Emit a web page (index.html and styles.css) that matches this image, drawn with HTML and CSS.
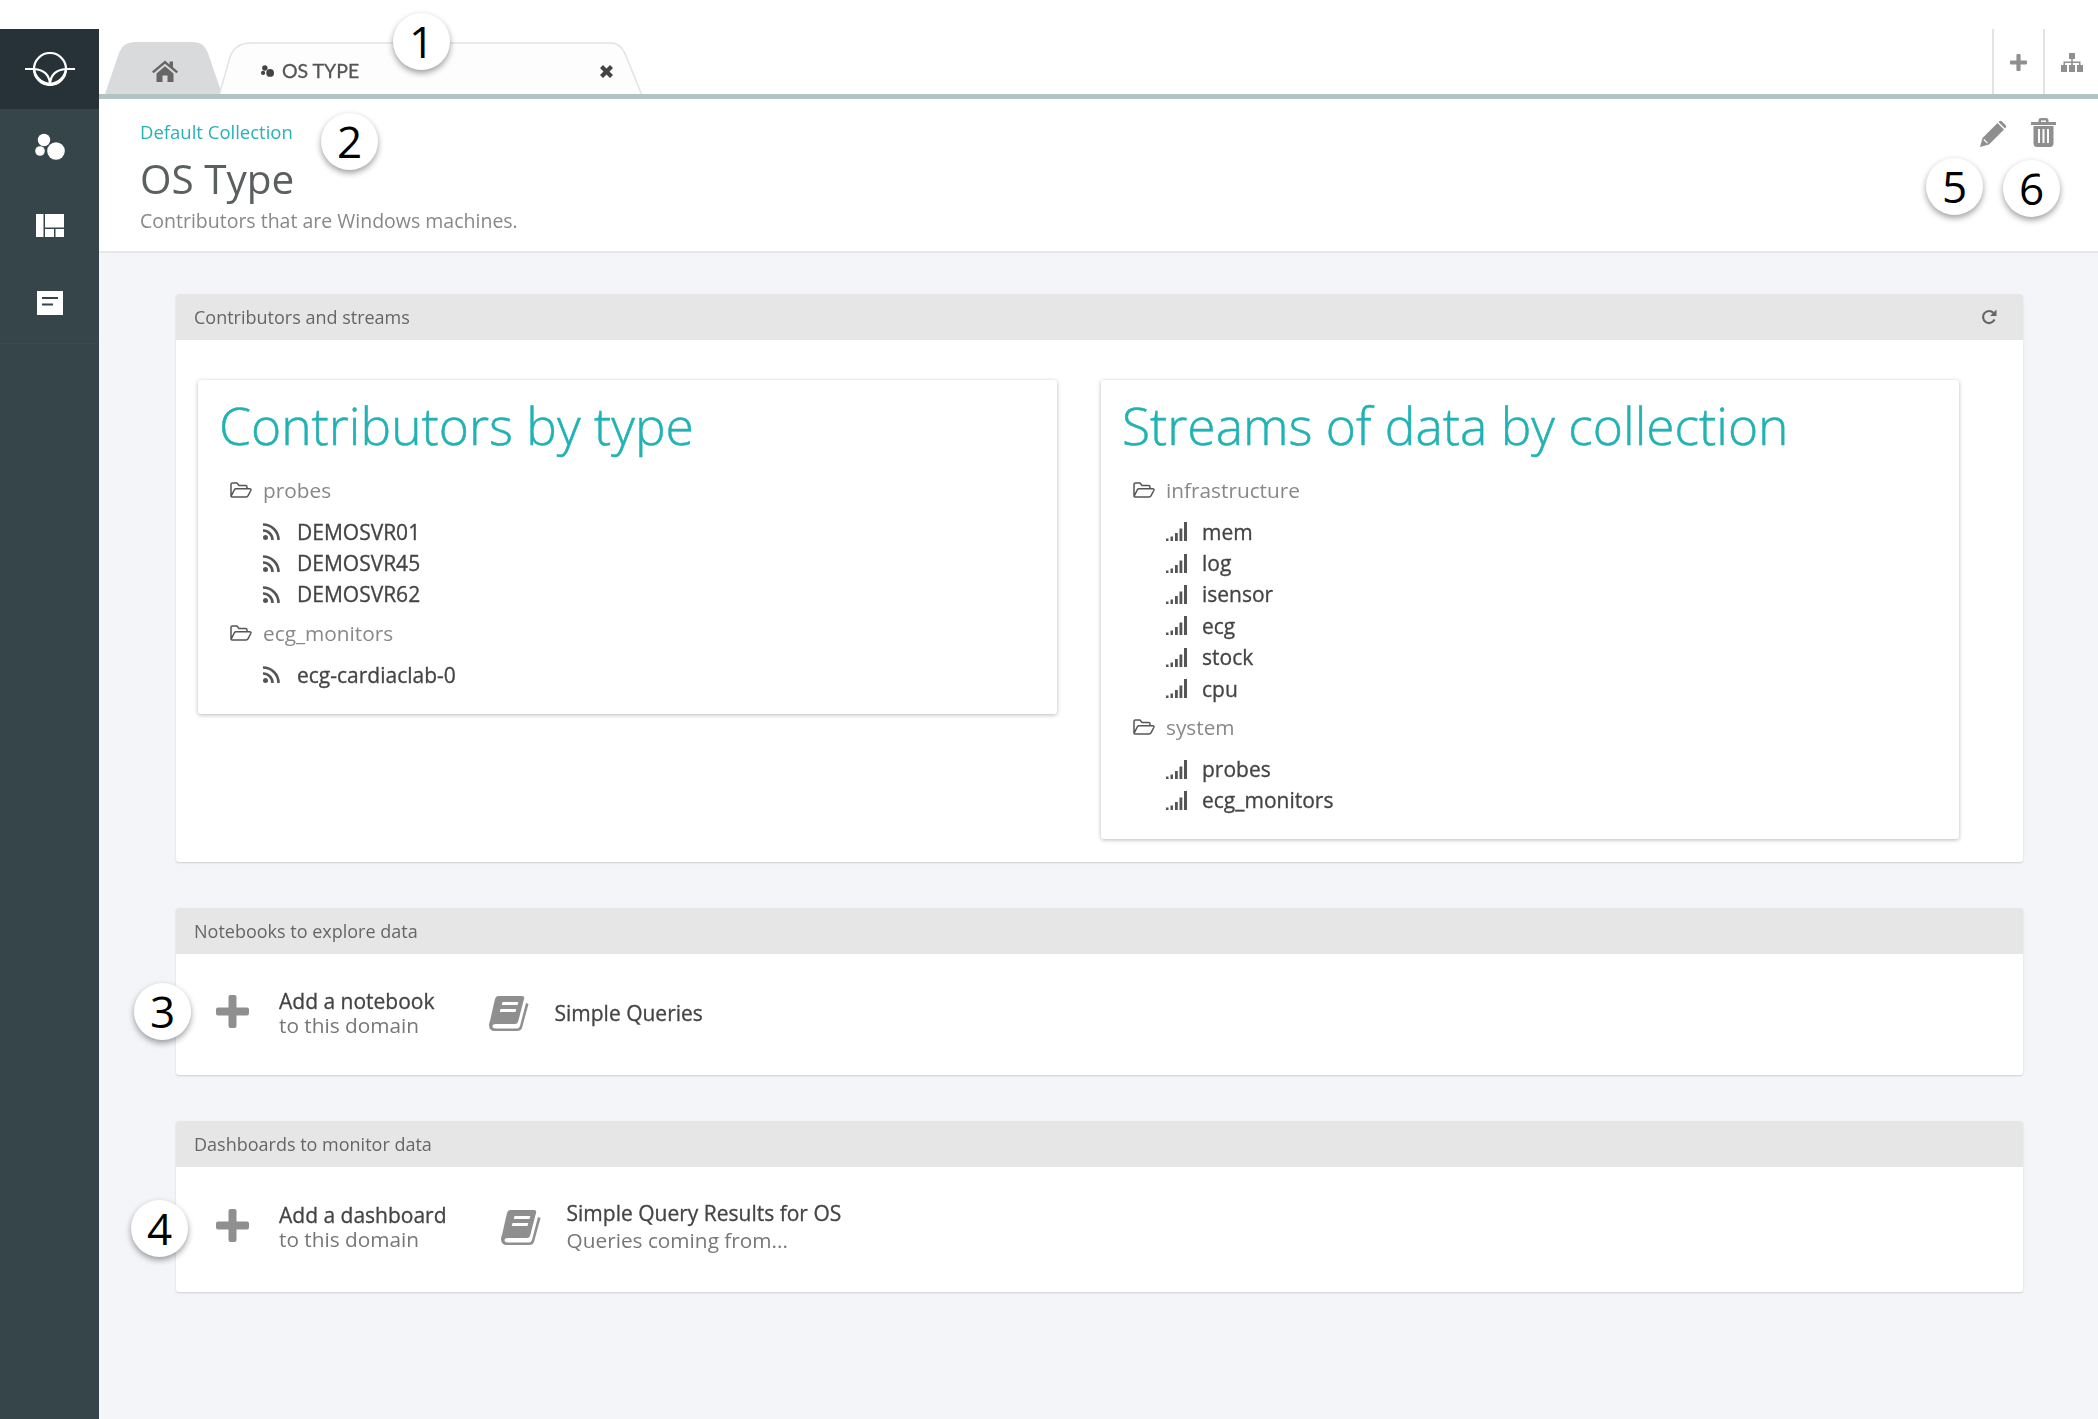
FILE: index.html
```html
<!DOCTYPE html>
<html lang="en">
<head>
<meta charset="UTF-8">
<title>OS Type</title>
<link rel="stylesheet" href="styles.css">
</head>
<body>
<svg class="defs" width="0" height="0">
  <symbol id="i-cluster" viewBox="0 0 34 34">
    <circle cx="11" cy="7" r="6.2"/><circle cx="7" cy="18" r="4.8"/><circle cx="23" cy="18" r="8.8"/>
  </symbol>
  <symbol id="i-plus" viewBox="0 0 33 33">
    <path d="M12.5 2q0-2 2-2h4q2 0 2 2v10.500h10.500q2 0 2 2v4q0 2-2 2h-10.500v10.500q0 2-2 2h-4q-2 0-2-2v-10.500h-10.500q-2 0-2-2v-4q0-2 2-2h10.500z"/>
  </symbol>
  <symbol id="i-folder" viewBox="0 0 22 16">
    <path d="M1 14V2.500Q1 1 2.500 1H7l2 2.500h6.500Q17 3.500 17 5v1.800M1 14.300L4.500 7.500Q5 6.800 6 6.800h13.500Q21.500 6.800 20.800 8.500L18 13.800Q17.500 15 16 15H2Q1 15 1 14.300z" fill="none" stroke="currentColor" stroke-width="1.500" stroke-linejoin="round"/>
  </symbol>
  <symbol id="i-rss" viewBox="0 0 18 17">
    <circle cx="2.500" cy="14.500" r="2.500" fill="currentColor"/>
    <path d="M0 7.500A9.500 9.500 0 0 1 9.500 17M0 1.500A15.500 15.500 0 0 1 15.500 17" fill="none" stroke="currentColor" stroke-width="2.600"/>
  </symbol>
  <symbol id="i-signal" viewBox="0 0 21 19">
    <path d="M0 16.500h2.500V19H0zM4.500 14.500H7V19H4.500zM9 11h2.800v8H9zM13.500 6.500h2.800V19h-2.800zM18 0h3v19h-3z" fill="currentColor"/>
  </symbol>
  <symbol id="i-book" viewBox="0 0 40 36">
    <path fill-rule="evenodd" d="M9 1H33Q36 1 35 4L29 27Q28.500 29 26 29H7Q3.500 29 3.500 31Q3.500 33.500 7 33.500H28Q30 33.500 31 31L37 8L39.500 9L33 33Q32 36 28 36H6Q0 36 0 30Q0 28 1 26L6 4Q7 1 9 1ZM13.500 7L12.800 10H28.500L29.300 7ZM11.500 14L10.800 17H26.500L27.300 14Z"/>
  </symbol>
</svg>

<div class="top-gap"></div>

<div class="app">
  <nav class="sidebar">
    <div class="logo">
      <svg width="50" height="34" viewBox="0 0 50 34" fill="none" stroke="#fff" stroke-width="2.200">
        <circle cx="25" cy="17" r="16"/>
        <path d="M0 17H10M40 17H50"/>
        <path d="M9 17Q24 18 25 32Q11 30 9 17Z"/>
        <path d="M41 17Q26 18 25 32Q39 30 41 17Z"/>
      </svg>
    </div>
    <div class="side-links">
      <a class="side-link"><svg class="side-icon" width="34" height="34"><use href="#i-cluster"/></svg></a>
      <a class="side-link">
        <svg width="28" height="23" viewBox="0 0 28 23" fill="#fff"><path d="M0 0h7.500v23H0zM9 0h19v13.500H9zM9 15h9v8H9zM19.500 15H28v8h-8.500z"/></svg>
      </a>
      <a class="side-link">
        <svg width="26" height="24" viewBox="0 0 26 24"><rect width="26" height="24" fill="#fff"/><path d="M5 6h16v2H5zM5 12.500h11v2H5z" fill="#36454a"/></svg>
      </a>
    </div>
  </nav>

  <main class="main">
    <div class="tabstrip">
      <div class="tabs">
        <div class="tab tab-home">
          <svg class="tab-shape" width="117" height="52" viewBox="0 0 117 52"><path d="M0 52L14 11Q18 0 30 0H88Q99 0 103 11L117 52Z" fill="#d9dadc"/></svg>
          <svg class="tab-icon" width="26" height="22" viewBox="0 0 26 22" fill="#666">
            <path d="M13 0.500L0 11.500l1.500 1.800L13 3.800l11.500 9.500 1.500-1.800-5-4.200V1.500h-3.500v3z"/>
            <path d="M4.500 13.500L13 6.300l8.500 7.200V22h-6v-6.500h-5V22h-6z"/>
          </svg>
        </div>
        <div class="tab tab-active">
          <svg class="tab-shape" width="423" height="52" viewBox="0 0 423 52"><path d="M0.500 52L11 15Q16 1 32 1H392Q402 1 407 14L422.500 52" fill="#fdfdfd" stroke="#e2e3e3" stroke-width="1.500"/></svg>
          <svg class="tab-dots" width="15" height="15"><use href="#i-cluster"/></svg>
          <span class="tab-label">OS TYPE</span>
          <svg class="tab-close" width="13" height="13" viewBox="0 0 13 13" fill="#444"><path d="M0 3L3 0l3.500 3.500L10 0l3 3-3.500 3.500L13 10l-3 3-3.500-3.500L3 13l-3-3 3.500-3.500z"/></svg>
        </div>
      </div>
      <div class="tools">
        <div class="tool"><svg class="tool-icon" width="17" height="17"><use href="#i-plus"/></svg></div>
        <div class="tool tool-last">
          <svg class="tool-icon" width="22" height="19" viewBox="0 0 22 19"><path d="M8 0h6v6h-2.200v2.500H19.500V12H22v7h-6v-7h2V10H11.800v2H14v7H8v-7h2.200v-2H4v2h2v7H0v-7h2.500V8.500h7.700V6H8z"/></svg>
        </div>
      </div>
    </div>

    <header class="page-head">
      <div class="head-text">
        <a class="crumb">Default Collection</a>
        <h1 class="page-title">OS Type</h1>
        <p class="page-desc">Contributors that are Windows machines.</p>
      </div>
      <div class="head-actions">
        <svg class="head-icon head-pencil" width="27" height="27" viewBox="0 0 27 27"><path d="M0 27L2.500 18 17.500 3 24 9.500 9 24.500ZM19 1.500Q20.500 0 22 1.500L25.500 5Q27 6.500 25.500 8L25 8.500 18.500 2Z"/><path d="M3.800 19.500L7.500 23.200" stroke="#fff" stroke-width="1.200"/></svg>
        <svg class="head-icon" width="25" height="29" viewBox="0 0 25 29"><path fill-rule="evenodd" d="M7.500 4V2.500Q7.500 0 10 0h5q2.500 0 2.500 2.500V4H25v3H0V4ZM10 4h5V2.500h-5ZM2.500 8h20v17q0 4-3.500 4H6q-3.500 0-3.500-4ZM7 11v14h2V11ZM11.500 11v14h2V11ZM16 11v14h2V11Z"/></svg>
      </div>
    </header>

    <div class="content">
      <section class="panel">
        <div class="panel-head">
          <span>Contributors and streams</span>
          <svg class="refresh" width="16" height="16" viewBox="0 0 16 16" fill="none" stroke="#666" stroke-width="2.200"><path d="M13.500 10.500A6 6 0 1 1 12.500 4"/><path d="M15.500 0.500V7H9z" fill="#666" stroke="none"/></svg>
        </div>
        <div class="panel-body cards">
          <div class="card">
            <h2 class="card-title">Contributors by type</h2>
            <div class="folder"><svg class="folder-icon" width="22" height="16"><use href="#i-folder"/></svg>probes</div>
            <ul class="leaves">
              <li><svg class="leaf-icon" width="18" height="17"><use href="#i-rss"/></svg>DEMOSVR01</li>
              <li><svg class="leaf-icon" width="18" height="17"><use href="#i-rss"/></svg>DEMOSVR45</li>
              <li><svg class="leaf-icon" width="18" height="17"><use href="#i-rss"/></svg>DEMOSVR62</li>
            </ul>
            <div class="folder"><svg class="folder-icon" width="22" height="16"><use href="#i-folder"/></svg>ecg_monitors</div>
            <ul class="leaves">
              <li><svg class="leaf-icon" width="18" height="17"><use href="#i-rss"/></svg>ecg-cardiaclab-0</li>
            </ul>
          </div>
          <div class="card">
            <h2 class="card-title">Streams of data by collection</h2>
            <div class="folder"><svg class="folder-icon" width="22" height="16"><use href="#i-folder"/></svg>infrastructure</div>
            <ul class="leaves">
              <li><svg class="leaf-icon leaf-signal" width="21" height="19"><use href="#i-signal"/></svg>mem</li>
              <li><svg class="leaf-icon leaf-signal" width="21" height="19"><use href="#i-signal"/></svg>log</li>
              <li><svg class="leaf-icon leaf-signal" width="21" height="19"><use href="#i-signal"/></svg>isensor</li>
              <li><svg class="leaf-icon leaf-signal" width="21" height="19"><use href="#i-signal"/></svg>ecg</li>
              <li><svg class="leaf-icon leaf-signal" width="21" height="19"><use href="#i-signal"/></svg>stock</li>
              <li><svg class="leaf-icon leaf-signal" width="21" height="19"><use href="#i-signal"/></svg>cpu</li>
            </ul>
            <div class="folder"><svg class="folder-icon" width="22" height="16"><use href="#i-folder"/></svg>system</div>
            <ul class="leaves">
              <li><svg class="leaf-icon leaf-signal" width="21" height="19"><use href="#i-signal"/></svg>probes</li>
              <li><svg class="leaf-icon leaf-signal" width="21" height="19"><use href="#i-signal"/></svg>ecg_monitors</li>
            </ul>
          </div>
        </div>
      </section>

      <section class="panel">
        <div class="panel-head"><span>Notebooks to explore data</span></div>
        <div class="panel-body entries entries-nb">
          <a class="entry entry-add">
            <svg class="entry-plus" width="33" height="33"><use href="#i-plus"/></svg>
            <span class="entry-text"><b class="entry-name">Add a notebook</b><span class="entry-sub">to this domain</span></span>
          </a>
          <a class="entry">
            <svg class="entry-book" width="40" height="36"><use href="#i-book"/></svg>
            <span class="entry-text"><b class="entry-name">Simple Queries</b></span>
          </a>
        </div>
      </section>

      <section class="panel">
        <div class="panel-head"><span>Dashboards to monitor data</span></div>
        <div class="panel-body entries entries-db">
          <a class="entry entry-add">
            <svg class="entry-plus" width="33" height="33"><use href="#i-plus"/></svg>
            <span class="entry-text"><b class="entry-name">Add a dashboard</b><span class="entry-sub">to this domain</span></span>
          </a>
          <a class="entry">
            <svg class="entry-book" width="40" height="36"><use href="#i-book"/></svg>
            <span class="entry-text entry-text-wide"><b class="entry-name">Simple Query Results for OS</b><span class="entry-sub">Queries coming from...</span></span>
          </a>
        </div>
      </section>
    </div>
  </main>
</div>

<span class="badge badge-1">1</span>
<span class="badge badge-2">2</span>
<span class="badge badge-3">3</span>
<span class="badge badge-4">4</span>
<span class="badge badge-5">5</span>
<span class="badge badge-6">6</span>
</body>
</html>
```
FILE: styles.css
```css
* {
  box-sizing: border-box;
}
html, body {
  margin: 0;
  padding: 0;
  height: 100%;
  overflow: hidden;
}
body {
  position: relative;
  display: flex;
  flex-direction: column;
  background: #fff;
  color: #555;
  font-family: "Open Sans", sans-serif;
  font-size: 18px;
}
.defs {
  position: absolute;
}
.top-gap {
  height: 29px;
  flex: none;
}
.app {
  flex: 1;
  display: flex;
  min-height: 0;
  filter: blur(.6px);
}

/* sidebar */
.sidebar {
  width: 99px;
  flex: none;
  background: #36454a;
}
.logo {
  height: 80px;
  background: #263238;
  display: flex;
  align-items: center;
  justify-content: center;
}
.side-links {
  margin-top: -1px;
  height: 236px;
  border-bottom: 1px solid #3a494e;
}
.side-link {
  height: 78px;
  display: flex;
  align-items: center;
  justify-content: center;
}
.side-icon {
  fill: #fff;
  margin-top: 5px;
}

/* tabs */
.main {
  flex: 1;
  min-width: 0;
  display: flex;
  flex-direction: column;
  background: #f3f5f9;
}
.tabstrip {
  height: 70px;
  flex: none;
  display: flex;
  justify-content: space-between;
  background: #fff;
  border-bottom: 5px solid #b1c4c4;
  padding-left: 6px;
}
.tabs {
  display: flex;
  align-items: flex-end;
}
.tab {
  position: relative;
  height: 52px;
  display: flex;
  align-items: center;
}
.tab-shape {
  position: absolute;
  left: 0;
  top: 0;
}
.tab-home {
  width: 117px;
  justify-content: center;
  padding-top: 6px;
  padding-left: 3px;
}
.tab-home .tab-icon {
  position: relative;
}
.tab-active {
  width: 423px;
  margin-left: -3px;
  padding-left: 41px;
  padding-top: 5px;
}
.tab-dots {
  position: relative;
  fill: #444;
  margin-right: 7px;
  margin-top: 3px;
}
.tab-label {
  position: relative;
  font-family: "Lato", sans-serif;
  font-size: 19.5px;
  color: #555;
  -webkit-text-stroke: .3px #555;
}
.tab-close {
  position: absolute;
  left: 381px;
  top: 23px;
}
.tools {
  display: flex;
}
.tool {
  width: 51px;
  display: flex;
  align-items: center;
  justify-content: center;
  border-left: 2px solid #e3e3e3;
  padding-top: 2px;
}
.tool-last {
  width: 55px;
}
.tool-icon {
  fill: #8f8f8f;
}

/* page header */
.page-head {
  height: 154px;
  flex: none;
  display: flex;
  justify-content: space-between;
  background: #fff;
  border-bottom: 2px solid #e5e7ea;
  padding: 19px 42px 0 41px;
}
.crumb {
  display: block;
  font-size: 18.5px;
  line-height: 27px;
  color: #27b3b5;
}
.page-title {
  margin: 7px 0 0;
  font-size: 40.5px;
  font-weight: 400;
  line-height: 54px;
  color: #5a5f60;
}
.page-desc {
  margin: 1px 0 0;
  font-size: 19.5px;
  line-height: 27px;
  color: #888;
}
.head-actions {
  display: flex;
  align-items: flex-start;
  gap: 24px;
}
.head-icon {
  fill: #8f8f8f;
}
.head-pencil {
  margin-top: 2px;
}

/* panels */
.content {
  flex: 1;
  padding: 41px 75px 0 77px;
  display: flex;
  flex-direction: column;
  gap: 46px;
}
.panel {
  background: #fff;
  border-radius: 3px;
  box-shadow: 0 1px 2px rgba(0, 0, 0, .16);
}
.panel-head {
  height: 46px;
  background: #e6e6e6;
  border-radius: 3px 3px 0 0;
  padding: 0 26px 0 18px;
  display: flex;
  align-items: center;
  justify-content: space-between;
  font-size: 18px;
  color: #666;
}
.cards {
  display: grid;
  grid-template-columns: 859px 858px;
  column-gap: 44px;
  align-items: start;
  padding: 40px 0 23px 22px;
}
.card {
  background: #fff;
  border-radius: 3px;
  box-shadow: 0 1px 4px rgba(0, 0, 0, .28);
  padding: 0 24px 23px 24px;
}
.card-title {
  margin: 0 0 0 -3px;
  height: 95px;
  padding-top: 9px;
  font-size: 51.5px;
  line-height: 72px;
  font-weight: 300;
  color: #21b2b4;
  white-space: nowrap;
  -webkit-text-stroke: .5px #21b2b4;
}
.folder {
  height: 30px;
  display: flex;
  align-items: center;
  padding-left: 8px;
  color: #888;
  font-size: 20.8px;
}
.folder-icon {
  color: #555;
  margin-right: 11px;
}
.leaves {
  list-style: none;
  margin: 11px 0 8px;
  padding: 0 0 0 41px;
}
.leaves:last-child {
  margin-bottom: 0;
}
.leaves li {
  height: 31.4px;
  display: flex;
  align-items: center;
  color: #444;
  font-size: 21px;
  -webkit-text-stroke: .3px #444;
}
.leaf-icon {
  color: #555;
  margin-right: 16px;
}
.leaf-signal {
  margin-right: 15px;
}
.entries {
  display: flex;
  align-items: center;
  padding-left: 40px;
  gap: 54px;
}
.entries-nb {
  height: 121px;
  padding-bottom: 3px;
}
.entries-db {
  height: 125px;
  padding-bottom: 5px;
}
.entry {
  display: flex;
  align-items: center;
  gap: 26px;
}
.entry-add {
  gap: 30px;
}
.entry-plus,
.entry-book {
  fill: #8f8f8f;
  flex: none;
}
.entry-plus {
  margin-top: -4px;
}
.entry-text {
  display: flex;
  flex-direction: column;
  line-height: 24px;
}
.entry-text-wide {
  line-height: 27px;
}
.entry-name {
  font-size: 21px;
  font-weight: 400;
  color: #444;
  -webkit-text-stroke: .3px #444;
}
.entry-sub {
  font-size: 20.8px;
  color: #777;
}

/* callout numbers over the screenshot */
.badge {
  position: absolute;
  width: 57px;
  height: 57px;
  border-radius: 50%;
  background: #fff;
  box-shadow: 0 3px 6px rgba(0, 0, 0, .38);
  color: #000;
  font-size: 44px;
  line-height: 57px;
  text-align: center;
}
.badge-1 { left: 393px; top: 13px; }
.badge-2 { left: 321px; top: 113px; }
.badge-3 { left: 134px; top: 983px; }
.badge-4 { left: 131px; top: 1200px; }
.badge-5 { left: 1926px; top: 158px; }
.badge-6 { left: 2003px; top: 160px; }
```
